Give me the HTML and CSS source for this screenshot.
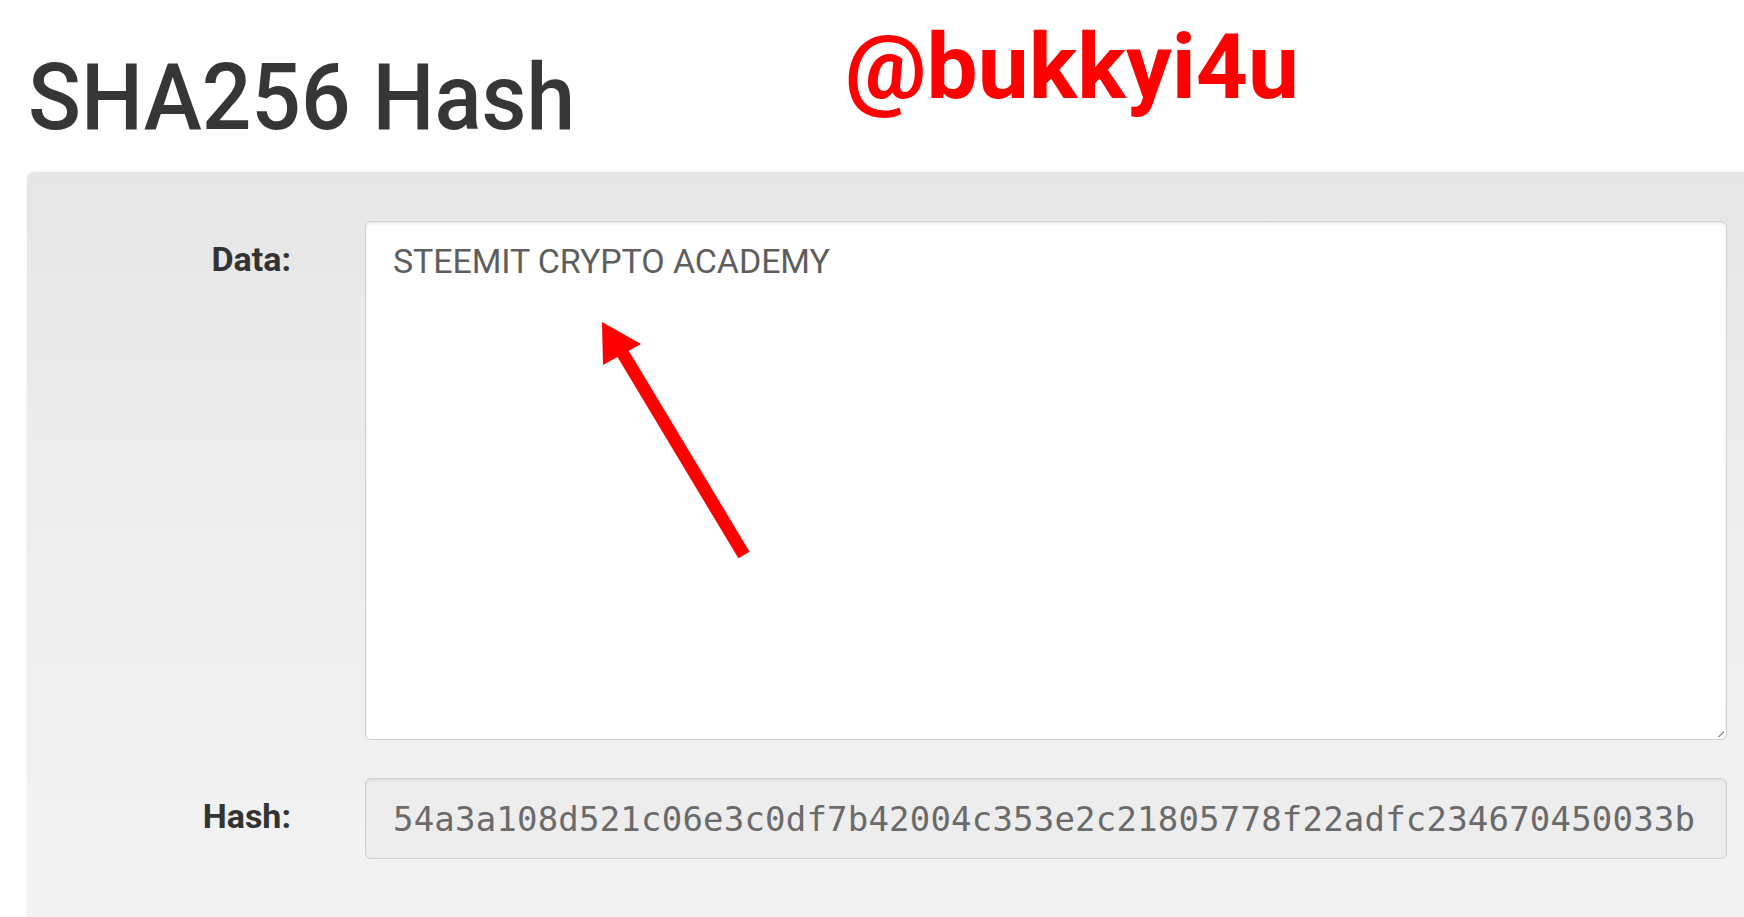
FILE: index.html
```html
<!DOCTYPE html>
<html lang="en">
<head>
<meta charset="utf-8">
<title>SHA256 Hash</title>
<link rel="stylesheet" href="styles.css">
</head>
<body>
<header class="header">
  <div class="title-wrap"><h1 class="title">SHA256 Hash</h1></div>
  <div class="handle">@bukkyi4u</div>
</header>
<main class="panel">
  <div class="form">
    <div class="label">Data:</div>
    <div class="field textarea">STEEMIT CRYPTO ACADEMY<span class="grip"></span></div>
    <div class="label">Hash:</div>
    <div class="field hash">54a3a108d521c06e3c0df7b42004c353e2c21805778f22adfc234670450033b</div>
  </div>
</main>
<svg class="arrow" width="1744" height="917" viewBox="0 0 1744 917" aria-hidden="true">
  <line x1="744" y1="555" x2="622" y2="352" stroke="#ff0000" stroke-width="13"/>
  <polygon points="602,322 603,365 641,344" fill="#ff0000"/>
</svg>
</body>
</html>
```
FILE: styles.css
```css
html, body {
  margin: 0;
  padding: 0;
  background: #ffffff;
  overflow: hidden;
  width: 1744px;
  height: 917px;
}
body {
  font-family: Roboto, "Liberation Sans", Arial, sans-serif;
  position: relative;
}
.header {
  display: grid;
  grid-template-columns: 817px 1fr;
  height: 172px;
  padding-left: 28px;
  box-sizing: border-box;
}
.title {
  display: inline-block;
  margin: 52px 0 0 0;
  font-size: 92px;
  line-height: 92px;
  font-weight: 500;
  color: #363636;
  white-space: nowrap;
  transform: scaleX(0.95);
  transform-origin: left center;
}
.handle {
  margin-top: 22px;
  font-size: 91px;
  line-height: 91px;
  font-weight: 700;
  color: #ff0000;
  white-space: nowrap;
}
.panel {
  margin-left: 27px;
  height: 745px;
  border-top-left-radius: 7px;
  background: linear-gradient(to bottom, #e6e6e6 0%, #eeeeee 50%, #f3f3f3 100%);
  box-shadow: 0 0 2px rgba(0, 0, 0, 0.12);
  padding-top: 49px;
  box-sizing: border-box;
}
.form {
  display: grid;
  grid-template-columns: 264px 1fr;
  column-gap: 74px;
  row-gap: 38px;
  padding-right: 17px;
}
.label {
  text-align: right;
  font-weight: 700;
  font-size: 34px;
  line-height: 34px;
  color: #333333;
  padding-top: 21px;
}
.field {
  border: 1px solid #cfcfcf;
  border-radius: 6px;
  box-sizing: border-box;
  color: #5e5e5e;
  font-size: 34px;
  line-height: 34px;
  padding-left: 27px;
  position: relative;
}
.textarea {
  height: 519px;
  background: #ffffff;
  padding-top: 22px;
  box-shadow: inset 0 2px 3px rgba(0, 0, 0, 0.08);
  letter-spacing: -0.1px;
}
.grip {
  position: absolute;
  right: 2px;
  bottom: 2px;
  width: 6px;
  height: 6px;
  background: linear-gradient(135deg, transparent 50%, #9a9a9a 50%, #9a9a9a 65%, transparent 65%);
}
.hash {
  height: 81px;
  background: #ededed;
  display: flex;
  align-items: center;
  font-family: "DejaVu Sans Mono", "Liberation Mono", monospace;
  color: #6a6a6a;
  letter-spacing: 0.2px;
  box-shadow: inset 0 2px 2px rgba(0, 0, 0, 0.05);
}
.arrow {
  position: absolute;
  left: 0;
  top: 0;
  pointer-events: none;
}
```
